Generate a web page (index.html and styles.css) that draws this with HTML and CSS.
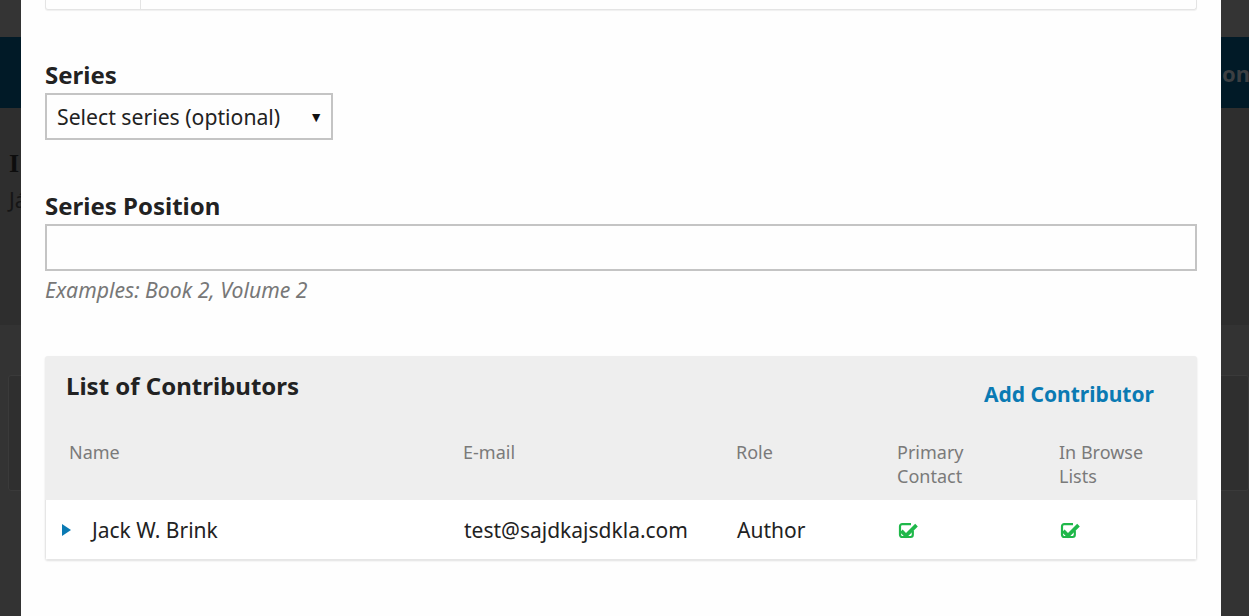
FILE: index.html
```html
<!DOCTYPE html>
<html lang="en">
<head>
<meta charset="utf-8">
<title>Series</title>
<link rel="stylesheet" href="styles.css">
</head>
<body>
<div class="page">
  <div class="page-top"></div>
  <div class="page-nav"><span class="nav-text">on I</span></div>
  <div class="page-head">
    <div class="head-title">I</div>
    <div class="head-sub">Já</div>
  </div>
  <div class="page-body">
    <div class="page-card"></div>
  </div>
</div>

<div class="modal">
  <div class="prev-box"><div class="prev-cell"></div><div class="prev-cell wide"></div></div>

  <div class="field series-field">
    <label class="label">Series</label>
    <div class="select">
      <span>Select series (optional)</span>
      <span class="caret">&#9660;</span>
    </div>
  </div>

  <div class="field pos-field">
    <label class="label">Series Position</label>
    <div class="input"></div>
    <div class="help">Examples: Book 2, Volume 2</div>
  </div>

  <div class="panel">
    <div class="panel-head">
      <div class="panel-title">List of Contributors</div>
      <a class="add-link">Add Contributor</a>
    </div>
    <div class="cols head-cols">
      <div class="c-name">Name</div>
      <div class="c-mail">E-mail</div>
      <div class="c-role">Role</div>
      <div class="c-prim">Primary<br>Contact</div>
      <div class="c-brow">In Browse<br>Lists</div>
    </div>
    <div class="cols row">
      <div class="c-name"><span class="tri"></span>Jack W. Brink</div>
      <div class="c-mail">test@sajdkajsdkla.com</div>
      <div class="c-role">Author</div>
      <div class="c-prim"><svg class="chk" viewBox="0 0 21 19" width="21" height="19"><path d="M14.8 10.5v4.3a2.2 2.2 0 0 1-2.2 2.2H4.2A2.2 2.2 0 0 1 2 14.8V6.4a2.2 2.2 0 0 1 2.2-2.2h8.8" fill="none" stroke="#1fb84a" stroke-width="2.2"/><path d="M4.6 9.6l3.4 3.4 9.2-9.2 2.6 2.6-11.8 11.8-6-6z" fill="#1fb84a"/></svg></div>
      <div class="c-brow"><svg class="chk" viewBox="0 0 21 19" width="21" height="19"><path d="M14.8 10.5v4.3a2.2 2.2 0 0 1-2.2 2.2H4.2A2.2 2.2 0 0 1 2 14.8V6.4a2.2 2.2 0 0 1 2.2-2.2h8.8" fill="none" stroke="#1fb84a" stroke-width="2.2"/><path d="M4.6 9.6l3.4 3.4 9.2-9.2 2.6 2.6-11.8 11.8-6-6z" fill="#1fb84a"/></svg></div>
    </div>
  </div>
</div>
</body>
</html>
```

FILE: styles.css
```css
html, body {
  margin: 0;
  padding: 0;
  height: 100%;
  overflow: hidden;
}
body {
  background: #323232;
  font-family: "Noto Sans", "Open Sans", sans-serif;
  color: #222;
  position: relative;
}
.page {
  display: flex;
  flex-direction: column;
  height: 616px;
}
.page-top {
  height: 37px;
  background: #343434;
}
.page-nav {
  height: 71px;
  background: #011a27;
  display: flex;
  align-items: center;
  overflow: hidden;
  padding-left: 1222px;
}
.nav-text {
  color: #3c3f42;
  font-weight: 700;
  font-size: 22px;
  white-space: nowrap;
}
.page-head {
  height: 217px;
  background: #2e2e2e;
  padding: 42px 0 0 9px;
  box-sizing: border-box;
}
.head-title {
  font-family: "Liberation Serif", serif;
  font-weight: 700;
  font-size: 26px;
  color: #0d0d0d;
  line-height: 28px;
}
.head-sub {
  font-size: 21px;
  color: #151515;
  margin-top: 8px;
}
.page-body {
  flex: 1;
  background: #333333;
  padding: 50px 0 0 8px;
}
.page-card {
  height: 114px;
  border: 1px solid #3a3a3a;
  border-radius: 3px;
  background: #2f2f2f;
}

.modal {
  position: absolute;
  top: 0;
  left: 21px;
  width: 1200px;
  height: 616px;
  background: #fefefe;
  box-sizing: border-box;
  padding: 0 24px;
}
.prev-box {
  display: flex;
  height: 9px;
  border: 1px solid #e4e4e4;
  border-top: none;
  border-radius: 0 0 3px 3px;
  box-shadow: 0 1px 1px rgba(0,0,0,0.06);
}
.prev-cell {
  width: 94px;
  border-right: 1px solid #e4e4e4;
}
.prev-cell.wide {
  flex: 1;
  border-right: none;
}
.field {
  display: flex;
  flex-direction: column;
  align-items: flex-start;
}
.series-field {
  margin-top: 49px;
}
.pos-field {
  margin-top: 50px;
}
.label {
  font-weight: 700;
  font-size: 24px;
  line-height: 32px;
  color: #222;
  margin-bottom: 2px;
}
.select {
  width: 288px;
  height: 47px;
  box-sizing: border-box;
  border: 2px solid #c4c4c4;
  display: flex;
  align-items: center;
  justify-content: space-between;
  padding: 0 8px 0 10px;
  font-size: 21.2px;
  color: #222;
}
.caret {
  font-size: 14px;
  color: #111;
}
.input {
  align-self: stretch;
  height: 47px;
  box-sizing: border-box;
  border: 2px solid #c4c4c4;
}
.help {
  font-style: italic;
  font-size: 21.2px;
  color: #777;
  margin-top: 4px;
  line-height: 30px;
}
.panel {
  margin-top: 51px;
  background: #eeeeee;
  border-radius: 3px;
  box-shadow: 0 1px 2px rgba(0,0,0,0.12);
  overflow: hidden;
}
.panel-head {
  display: flex;
  justify-content: space-between;
  align-items: flex-start;
  padding: 14px 43px 0 21px;
  height: 72px;
  box-sizing: border-box;
}
.panel-title {
  font-weight: 700;
  font-size: 24px;
  line-height: 32px;
  color: #222;
}
.add-link {
  font-weight: 700;
  font-size: 21px;
  color: #0a7ab3;
  margin-top: 9px;
  line-height: 30px;
}
.cols {
  display: grid;
  grid-template-columns: 394px 273px 161px 162px 1fr;
  padding-left: 24px;
}
.head-cols {
  font-size: 18px;
  line-height: 24px;
  color: #7a7a7a;
  padding-top: 12px;
  height: 72px;
  box-sizing: border-box;
}
.row {
  background: #fff;
  height: 59px;
  align-items: center;
  font-size: 21px;
  color: #222;
  border: 1px solid #e6e6e6;
  border-top: none;
}
.row .c-name {
  display: flex;
  align-items: center;
  margin-left: -8px;
}
.tri {
  width: 0;
  height: 0;
  border-top: 6px solid transparent;
  border-bottom: 6px solid transparent;
  border-left: 9px solid #0a7ab3;
  margin-right: 21px;
}
.chk {
  display: block;
}
```
